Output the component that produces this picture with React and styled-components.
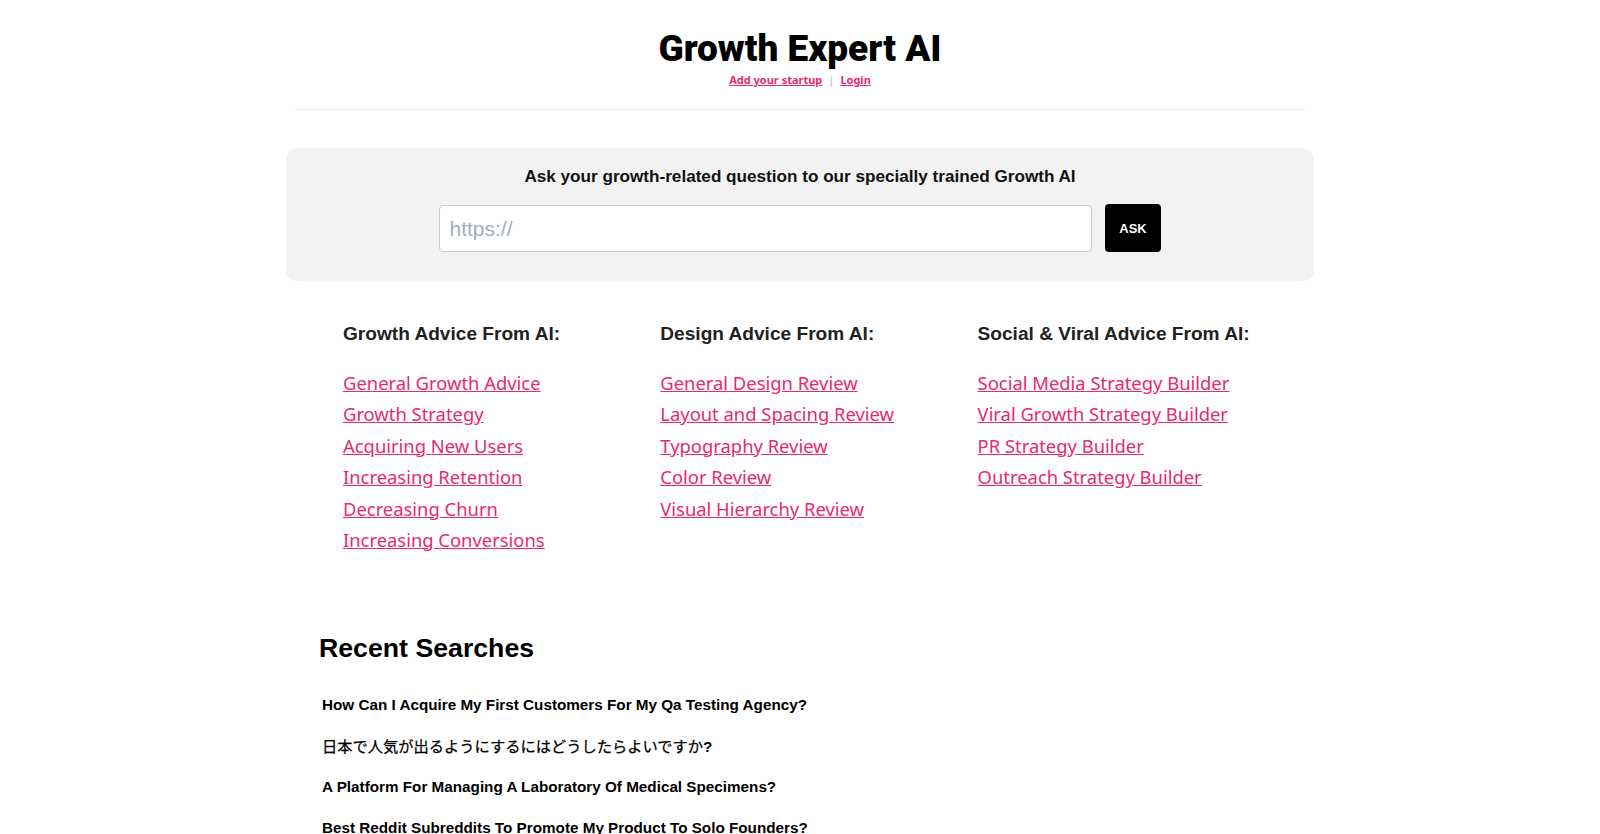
import React from "react";
import styled, { createGlobalStyle } from "styled-components";

const Global = createGlobalStyle`
  html, body { margin: 0; padding: 0; background: #fff; }
  body { font-family: "Liberation Sans", Arial, sans-serif; height: 834px; overflow: hidden; }
`;

const Page = styled.div`
  width: 1028px;
  margin: 0 auto;
`;

const Header = styled.header`
  width: 1011px;
  margin: 0 auto;
  height: 109px;
  border-bottom: 1px solid #eeeeee;
  text-align: center;
`;

const Logo = styled.h1`
  margin: 0;
  padding-top: 27px;
  font-family: Roboto, sans-serif;
  font-weight: 900;
  font-size: 37px;
  line-height: 44px;
  color: #000;
`;

const TopLinks = styled.div`
  font-family: "Noto Sans", sans-serif;
  font-size: 11px;
  line-height: 18px;
  color: #bbb;
  a { color: #e8296f; font-weight: 700; margin: 0 6px; }
`;

const AskPanel = styled.section`
  margin-top: 38px;
  height: 133px;
  box-sizing: border-box;
  padding-top: 16px;
  background: #f2f2f2;
  border-radius: 12px;
`;

const AskTitle = styled.h2`
  margin: 0;
  text-align: center;
  font-size: 17.14px;
  line-height: 24px;
  font-weight: 700;
  color: #111;
`;

const AskRow = styled.form`
  display: flex;
  justify-content: center;
  gap: 13px;
  margin-top: 17px;
`;

const UrlInput = styled.input`
  width: 653px;
  height: 47px;
  box-sizing: border-box;
  padding: 0 9.5px;
  border: 1px solid #ccc;
  border-radius: 4px;
  background: #fff;
  font-family: "Liberation Sans", sans-serif;
  font-size: 21px;
  &::placeholder { color: #a0aec0; opacity: 1; }
`;

const AskButton = styled.button`
  width: 56px;
  height: 48px;
  margin-top: -1px;
  border: 0;
  border-radius: 4px;
  background: #000;
  color: #fff;
  font-family: "Liberation Sans", sans-serif;
  font-weight: 700;
  font-size: 13px;
`;

const Columns = styled.div`
  display: grid;
  grid-template-columns: repeat(3, 317.3px);
  padding: 40px 0 0 57px;
`;

const ColumnTitle = styled.h3`
  margin: 0 0 20px;
  font-size: 19.1px;
  line-height: 26px;
  font-weight: 700;
  color: #222;
`;

const LinkList = styled.ul`
  list-style: none;
  margin: 0;
  padding: 0;
`;

const LinkItem = styled.li`
  height: 31.4px;
  line-height: 31.4px;
  font-family: "Noto Sans", sans-serif;
  font-size: 18.4px;
  a { color: #e8296f; }
`;

const Recent = styled.section`
  padding: 74.5px 0 0 33px;
`;

const RecentTitle = styled.h2`
  margin: 0 0 18px;
  font-size: 26.7px;
  line-height: 36px;
  font-weight: 700;
  color: #000;
`;

const RecentItem = styled.div`
  height: 41px;
  line-height: 41px;
  padding-left: 3px;
  font-size: 15.25px;
  font-weight: 700;
  color: #000;
  white-space: nowrap;
`;

const CjkText = styled.span`
  font-family: "Noto Sans CJK JP", sans-serif;
  font-weight: 400;
  -webkit-text-stroke: 0.25px #000;
`;

const columns = [
  {
    title: "Growth Advice From AI:",
    links: ["General Growth Advice", "Growth Strategy", "Acquiring New Users", "Increasing Retention", "Decreasing Churn", "Increasing Conversions"],
  },
  {
    title: "Design Advice From AI:",
    links: ["General Design Review", "Layout and Spacing Review", "Typography Review", "Color Review", "Visual Hierarchy Review"],
  },
  {
    title: "Social & Viral Advice From AI:",
    links: ["Social Media Strategy Builder", "Viral Growth Strategy Builder", "PR Strategy Builder", "Outreach Strategy Builder"],
  },
];

export default function App() {
  return (
    <Page>
      <Global />
      <Header>
        <Logo>Growth Expert AI</Logo>
        <TopLinks>
          <a href="#">Add your startup</a>|<a href="#">Login</a>
        </TopLinks>
      </Header>
      <AskPanel>
        <AskTitle>Ask your growth-related question to our specially trained Growth AI</AskTitle>
        <AskRow>
          <UrlInput placeholder="https://" />
          <AskButton type="button">ASK</AskButton>
        </AskRow>
      </AskPanel>
      <Columns>
        {columns.map((col) => (
          <div key={col.title}>
            <ColumnTitle>{col.title}</ColumnTitle>
            <LinkList>
              {col.links.map((l) => (
                <LinkItem key={l}><a href="#">{l}</a></LinkItem>
              ))}
            </LinkList>
          </div>
        ))}
      </Columns>
      <Recent>
        <RecentTitle>Recent Searches</RecentTitle>
        <RecentItem>How Can I Acquire My First Customers For My Qa Testing Agency?</RecentItem>
        <RecentItem><CjkText>日本で人気が出るようにするにはどうしたらよいですか</CjkText>?</RecentItem>
        <RecentItem>A Platform For Managing A Laboratory Of Medical Specimens?</RecentItem>
        <RecentItem>Best Reddit Subreddits To Promote My Product To Solo Founders?</RecentItem>
      </Recent>
    </Page>
  );
}
